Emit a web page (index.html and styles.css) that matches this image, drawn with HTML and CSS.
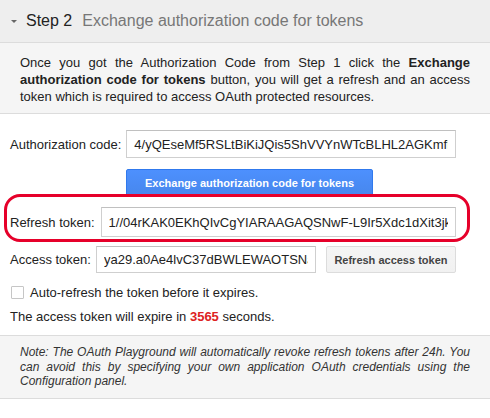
FILE: index.html
```html
<!DOCTYPE html>
<html>
<head>
<meta charset="utf-8">
<link rel="stylesheet" href="styles.css">
</head>
<body>
<div class="step">
  <div class="step-header">
    <span class="caret"></span>
    <span class="step-num">Step 2</span>
    <span class="step-title">Exchange authorization code for tokens</span>
  </div>
  <div class="step-desc">
    Once you got the Authorization Code from Step 1 click the <b>Exchange</b> <b>authorization code for tokens</b> button, you will get a refresh and an access token which is required to access OAuth protected resources.
  </div>
  <div class="step-body">
    <div class="row">
      <label class="lbl">Authorization code:</label>
      <input class="field grow" type="text" value="4/yQEseMf5RSLtBiKiJQis5ShVVYnWTcBLHL2AGKmfFxyz" readonly>
    </div>
    <div class="btn-row">
      <button class="btn-blue">Exchange authorization code for tokens</button>
    </div>
    <div class="row refresh-row">
      <label class="lbl">Refresh token:</label>
      <input class="field grow" type="text" value="1//04rKAK0EKhQIvCgYIARAAGAQSNwF-L9Ir5Xdc1dXit3jkUabc" readonly>
      <span class="highlight"></span>
    </div>
    <div class="row access-row">
      <label class="lbl">Access token:</label>
      <input class="field access" type="text" value="ya29.a0Ae4lvC37dBWLEWAOTSNaQxyz" readonly>
      <button class="btn-gray">Refresh access token</button>
    </div>
    <div class="check-row">
      <span class="checkbox"></span>
      <span>Auto-refresh the token before it expires.</span>
    </div>
    <div class="expire">The access token will expire in <b class="secs">3565</b> seconds.</div>
  </div>
  <div class="note">
    Note: The OAuth Playground will automatically revoke refresh tokens after 24h. You can avoid this by specifying your own application OAuth credentials using the Configuration panel.
  </div>
</div>
</body>
</html>
```

FILE: styles.css
```css
html, body {
  margin: 0;
  padding: 0;
  background: #ffffff;
}
body {
  font-family: "Liberation Sans", Arial, sans-serif;
  font-size: 13px;
  color: #222222;
  width: 490px;
}
.step-header {
  display: flex;
  align-items: center;
  background: #eeeeee;
  border-bottom: 1px solid #dcdcdc;
  padding-left: 11px;
  box-sizing: border-box;
  height: 43px;
  font-size: 16px;
}
.caret {
  width: 0;
  height: 0;
  border-left: 3px solid transparent;
  border-right: 3px solid transparent;
  border-top: 3px solid #666666;
  margin-right: 9px;
  margin-top: 1px;
}
.step-num {
  color: #222222;
  margin-right: 10px;
}
.step-title {
  color: #777777;
}
.step-desc {
  background: #f5f5f5;
  border-bottom: 1px solid #dcdcdc;
  padding: 11px 20px 8px 20px;
  line-height: 17px;
  text-align: justify;
  color: #222222;
}
.step-body {
  padding: 16px 34px 10px 10px;
}
.row {
  display: flex;
  align-items: center;
  gap: 5px;
  position: relative;
}
.lbl {
  white-space: nowrap;
  color: #222222;
}
.field {
  height: 28px;
  box-sizing: border-box;
  border: 1px solid #cfcfcf;
  border-top-color: #c0c0c0;
  padding: 0 7px;
  font-family: "Liberation Sans", Arial, sans-serif;
  font-size: 13px;
  color: #222222;
  background: #ffffff;
  outline: none;
  min-width: 0;
}
.grow {
  flex: 1;
}
.btn-row {
  margin-top: 11px;
  padding-left: 116px;
}
.btn-blue {
  width: 247px;
  height: 27px;
  box-sizing: border-box;
  border: 1px solid #3079ed;
  border-radius: 2px;
  background: linear-gradient(#4d90fe, #4787ed);
  color: #ffffff;
  font-family: "Liberation Sans", Arial, sans-serif;
  font-weight: bold;
  font-size: 11px;
  padding: 0;
}
.refresh-row {
  margin-top: 11px;
}
.refresh-row .field {
  height: 30px;
}
.refresh-row .lbl {
  margin-right: 1px;
}
.highlight {
  position: absolute;
  left: -6px;
  right: -14px;
  top: -13px;
  bottom: -5px;
  border: 3px solid #e6002a;
  border-radius: 16px;
  pointer-events: none;
}
.access-row {
  margin-top: 9px;
  gap: 0;
}
.access-row .lbl {
  margin-right: 5px;
}
.access {
  width: 220px;
  height: 27px;
}
.btn-gray {
  margin-left: 10px;
  width: 130px;
  height: 27px;
  box-sizing: border-box;
  border: 1px solid #dcdcdc;
  border-radius: 2px;
  background: linear-gradient(#f5f5f5, #f1f1f1);
  color: #444444;
  font-family: "Liberation Sans", Arial, sans-serif;
  font-weight: bold;
  font-size: 11px;
  padding: 0;
}
.check-row {
  display: flex;
  align-items: center;
  gap: 6px;
  margin-top: 11px;
  line-height: 17px;
  padding-left: 1px;
}
.checkbox {
  width: 11px;
  height: 11px;
  border: 1px solid #c6c6c6;
  border-radius: 1px;
  background: #ffffff;
}
.expire {
  margin-top: 7px;
  line-height: 17px;
}
.secs {
  color: #dd2222;
}
.note {
  border-top: 1px solid #dcdcdc;
  border-bottom: 1px solid #dcdcdc;
  background: #f5f5f5;
  padding: 9px 20px 9px 20px;
  font-style: italic;
  font-size: 12px;
  line-height: 14.5px;
  color: #333333;
  text-align: justify;
}
```
